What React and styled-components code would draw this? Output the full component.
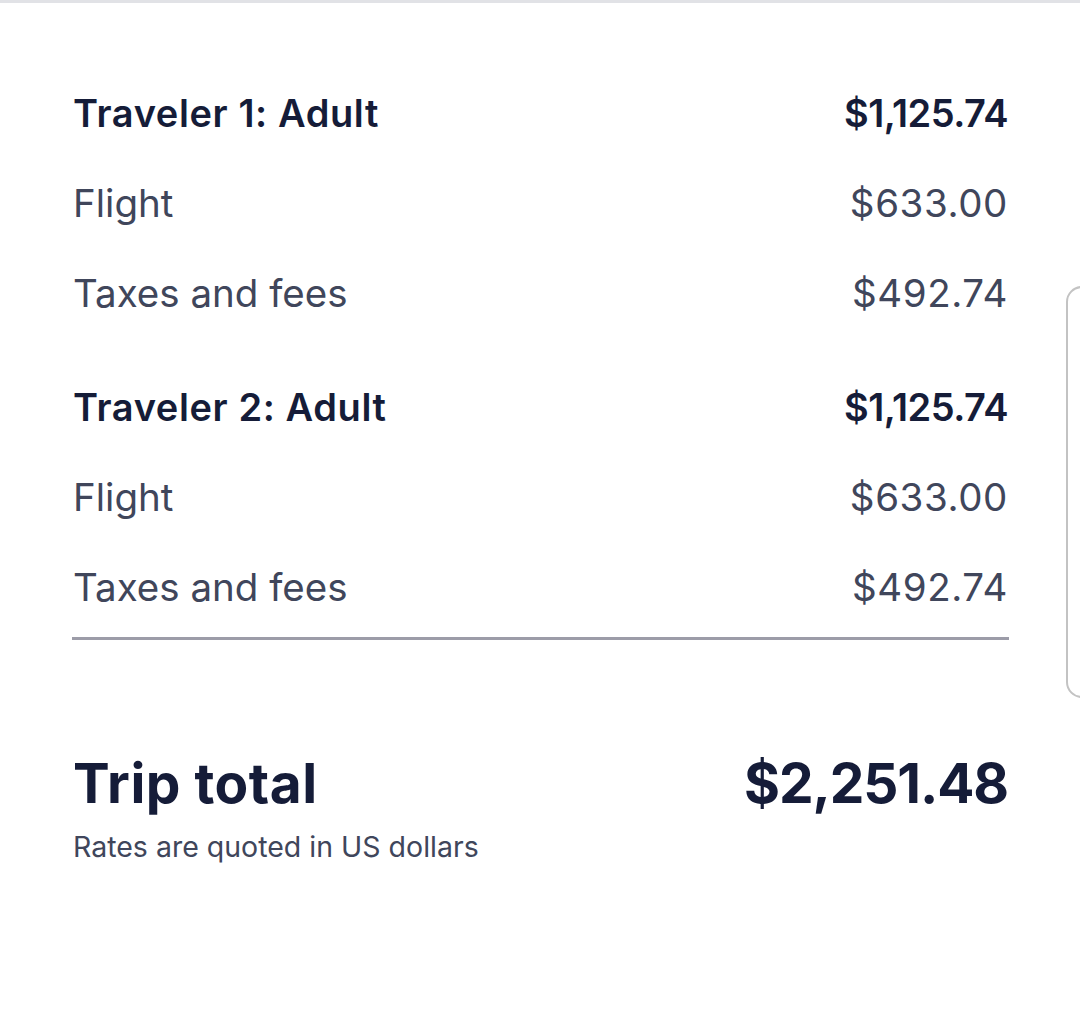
import React from "react";
import styled, { createGlobalStyle } from "styled-components";

const Global = createGlobalStyle`
  html, body { margin: 0; padding: 0; background: #ffffff; }
  body { font-family: Inter, Lato, sans-serif; }
`;

const Page = styled.div`
  position: relative;
  width: 1080px;
  height: 1036px;
  box-sizing: border-box;
  border-top: 3px solid #e1e2e6;
  background: #fff;
  overflow: hidden;
  padding: 80px 72px 0 73px;
`;

const Group = styled.div`
  display: flex;
  flex-direction: column;
  margin-bottom: ${(p) => p.$gap || 0}px;
`;

const Row = styled.div`
  display: flex;
  justify-content: space-between;
  align-items: baseline;
  height: ${(p) => p.$h || 90}px;
  line-height: 60px;
`;

const spacing = (p) => {
  if (p.$bold) return p.$num ? -0.5 : 0.6;
  return p.$num ? 0.6 : 0;
};

const Label = styled.span`
  font-size: ${(p) => (p.$bold ? 38 : 38.5)}px;
  font-weight: ${(p) => (p.$bold ? 600 : 400)};
  letter-spacing: ${spacing}px;
  color: ${(p) => (p.$bold ? "#151c38" : "#40465b")};
`;

const Divider = styled.hr`
  border: none;
  height: 3px;
  background: #9c9ca8;
  margin: 20px -1px 0 -1px;
`;

const TotalRow = styled.div`
  display: flex;
  justify-content: space-between;
  align-items: baseline;
  margin-top: 108px;
  line-height: 70px;
`;

const TotalText = styled.span`
  font-size: 55px;
  font-weight: 700;
  letter-spacing: ${(p) => (p.$num ? -1.1 : 0.5)}px;
  color: #151c38;
`;

const Note = styled.div`
  font-size: 28.5px;
  color: #40465b;
  margin-top: 11px;
`;

const Scroll = styled.div`
  position: absolute;
  left: 1066px;
  top: 283px;
  width: 40px;
  height: 408px;
  border: 2px solid #c3c3c3;
  border-radius: 16px;
`;

const groups = [
  { title: "Traveler 1: Adult", total: "$1,125.74" },
  { title: "Traveler 2: Adult", total: "$1,125.74" },
];

export default function App() {
  return (
    <>
      <Global />
      <Page>
        {groups.map((g, i) => (
          <Group key={i} $gap={i === 0 ? 24 : 0}>
            <Row>
              <Label $bold>{g.title}</Label>
              <Label $bold $num>{g.total}</Label>
            </Row>
            <Row>
              <Label>Flight</Label>
              <Label $num>$633.00</Label>
            </Row>
            <Row $h={i === 1 ? 60 : 90}>
              <Label>Taxes and fees</Label>
              <Label $num>$492.74</Label>
            </Row>
          </Group>
        ))}
        <Divider />
        <TotalRow>
          <TotalText>Trip total</TotalText>
          <TotalText $num>$2,251.48</TotalText>
        </TotalRow>
        <Note>Rates are quoted in US dollars</Note>
        <Scroll />
      </Page>
    </>
  );
}
